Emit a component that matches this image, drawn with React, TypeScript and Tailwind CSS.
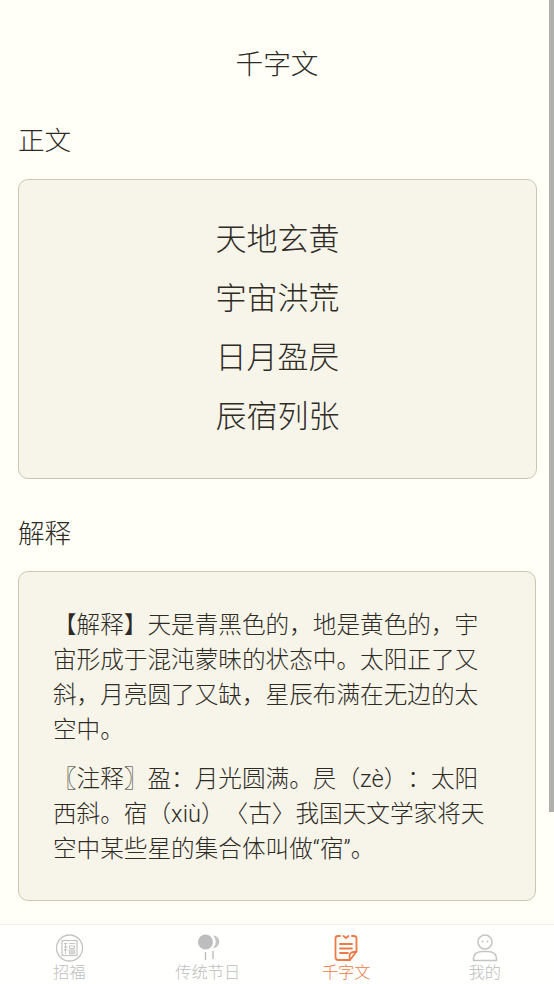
export default function App() {
  const poem = ["天地玄黄", "宇宙洪荒", "日月盈昃", "辰宿列张"];
  const tabs = [
    { label: "招福", icon: <FuIcon />, active: false },
    { label: "传统节日", icon: <BalloonIcon />, active: false },
    { label: "千字文", icon: <ScrollIcon />, active: true },
    { label: "我的", icon: <UserIcon />, active: false },
  ];
  return (
    <div className="relative flex h-[984px] w-[554px] flex-col overflow-hidden bg-[#fffff8] font-light text-[#2e2b25] [font-family:Roboto,'Noto_Sans_CJK_SC',sans-serif] [text-spacing-trim:space-all]">
      <main className="flex h-[924px] flex-col overflow-hidden">
        <h1 className="mt-[45px] text-center text-[27.7px] leading-[40px] font-light">千字文</h1>
        <h2 className="mt-[36px] ml-[18px] text-[26.6px] leading-[40px] font-light">正文</h2>
        <section className="mt-[18px] ml-[18px] flex h-[300px] w-[519px] flex-col items-center justify-center gap-[19px] rounded-[10px] border border-[#c9c7b3] bg-[#f7f5ea] pb-[2px]">
          {poem.map((l) => (
            <p key={l} className="text-[31px] leading-[40px]">{l}</p>
          ))}
        </section>
        <h2 className="mt-[35px] ml-[18px] text-[26.6px] leading-[40px] font-light">解释</h2>
        <section className="mt-[17px] ml-[18px] h-[330px] w-[518px] rounded-[10px] border border-[#c9c7b3] bg-[#f7f5ea] pt-[36px] pr-[40px] pl-[34px] text-[23.64px] leading-[35px]">
          <p>【解释】天是青黑色的，地是黄色的，宇宙形成于混沌蒙昧的状态中。太阳正了又斜，月亮圆了又缺，星辰布满在无边的太空中。</p>
          <p className="mt-[14px]">〖注释〗盈：月光圆满。昃（zè）：太阳西斜。宿（xiù）〈古〉我国天文学家将天空中某些星的集合体叫做“宿”。</p>
        </section>
      </main>
      <nav className="flex h-[60px] border-t border-[#f1f0ea] bg-[#fffffd]">
        {tabs.map((t) => (
          <div key={t.label} className={`flex flex-1 flex-col items-center pt-[9px] ${t.active ? "text-[#ec7a46]" : "text-[#bdbdbd]"}`}>
            <div className="h-[28px] w-[30px]">{t.icon}</div>
            <span className="mt-[1px] text-[16.25px] leading-[20px]">{t.label}</span>
          </div>
        ))}
      </nav>
      <div className="absolute top-0 right-0 h-[812px] w-[5px] bg-[#b0b0ac]" />
    </div>
  );
}

function FuIcon() {
  return (
    <svg viewBox="0 0 30 28" className="h-full w-full" fill="none" stroke="#c4c4c4">
      <circle cx="15.500" cy="14" r="13" strokeWidth="1.3" />
      <rect x="8" y="6.500" width="15" height="15" strokeWidth="1.2" />
      <path d="M10 9.500h3.500M11.500 9v11M10 13h3.500M11 15l-1 2M12.500 15l1 1.500M15 9.500h6M15.500 12h5v2.500h-5zM15.300 16h5.400v3.800h-5.400zM18 16v3.800M15.300 18h5.400" strokeWidth="1" />
    </svg>
  );
}

function BalloonIcon() {
  return (
    <svg viewBox="0 0 30 28" className="h-full w-full" fill="none">
      <path d="M20 1.500a6.300 6.300 0 0 1 0 12.600a8.500 8.500 0 0 0 0-12.600Z" fill="#c4c4c4" />
      <circle cx="12.500" cy="8" r="7.500" fill="#bdbdbd" />
      <path d="M12.500 18v8M20 17v8" stroke="#bdbdbd" strokeWidth="1.4" />
    </svg>
  );
}

function ScrollIcon() {
  return (
    <svg viewBox="0 0 30 28" className="h-full w-full" fill="none" stroke="#ec7a46" strokeWidth="1.8" strokeLinecap="round" strokeLinejoin="round">
      <path d="M9 2H7Q4.500 2 4.500 4.500V23Q4.500 26 7.500 26H19L25.500 17.500V4.500Q25.500 2 23 2H21" />
      <path d="M12.500 2l2.500 2 2.500-2M9 10h12M9 14.500h12" />
      <path d="M19 26q-1.500-6 1.500-7.500l5-1M9 19h8" />
    </svg>
  );
}

function UserIcon() {
  return (
    <svg viewBox="0 0 30 28" className="h-full w-full" fill="none" stroke="#c4c4c4" strokeWidth="1.6">
      <circle cx="15" cy="8" r="7" />
      <circle cx="12.500" cy="7.500" r="1" fill="#c4c4c4" stroke="none" />
      <circle cx="17.500" cy="7.500" r="1" fill="#c4c4c4" stroke="none" />
      <path d="M3.500 26.500v-2Q3.500 18 12 17.500h6q8.500 .5 8.500 7v2Z" strokeLinejoin="round" />
    </svg>
  );
}
